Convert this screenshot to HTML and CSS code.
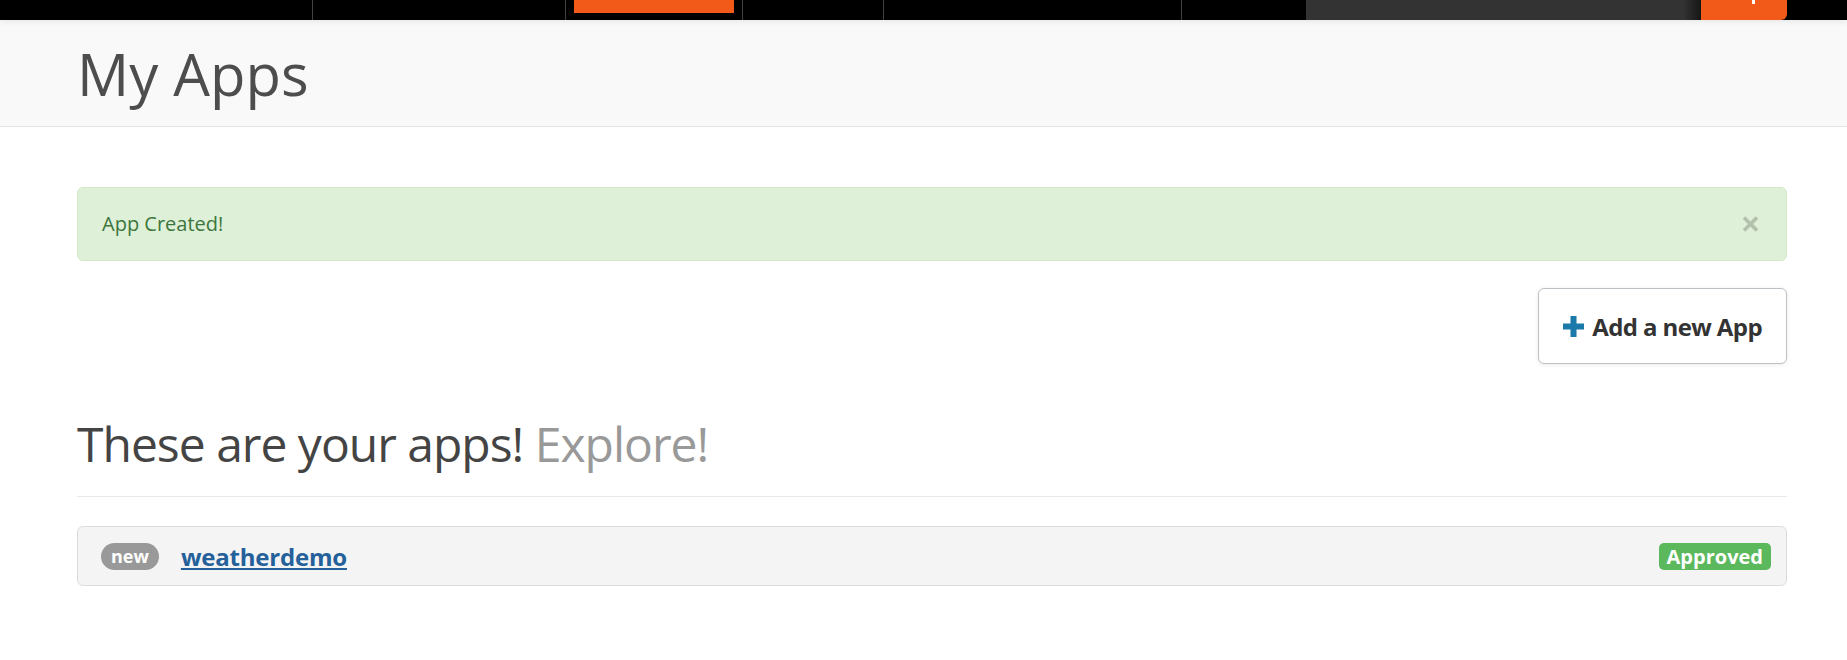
FILE: index.html
```html
<!DOCTYPE html>
<html lang="en">
<head>
  <meta charset="UTF-8">
  <meta name="viewport" content="width=device-width, initial-scale=1.0">
  <title>My Apps</title>
  <link rel="stylesheet" href="styles.css">
</head>
<body>
  <div class="topbar">
    <div class="nav-item nav-1"></div>
    <div class="nav-item nav-2"></div>
    <div class="nav-item nav-3 active"><span class="active-mark"></span></div>
    <div class="nav-item nav-4"></div>
    <div class="nav-item nav-5"></div>
    <div class="nav-spacer"></div>
    <div class="search-box"></div>
    <div class="login-btn"><span class="login-text"></span></div>
  </div>

  <div class="page-header">
    <div class="container">
      <h1>My Apps</h1>
    </div>
  </div>

  <div class="container main">
    <div class="alert">
      <span>App Created!</span>
      <button class="close" aria-label="Close">
        <svg width="17" height="16" viewBox="0 0 17 16"><path d="M2 1.5 L15 14.5 M15 1.5 L2 14.5" stroke="currentColor" stroke-width="3.6" fill="none"/></svg>
      </button>
    </div>

    <div class="actions">
      <button class="btn-add">
        <svg class="plus" width="21" height="21" viewBox="0 0 21 21"><path d="M7.5 0 H13.5 V7.5 H21 V13.5 H13.5 V21 H7.5 V13.5 H0 V7.5 H7.5 Z" fill="#1b7aa9"/></svg>
        Add a new App
      </button>
    </div>

    <h2 class="apps-title">These are your apps! <span class="muted">Explore!</span></h2>
    <hr>

    <div class="app-list">
      <div class="app-row">
        <span class="badge-new">new</span>
        <a href="#" class="app-link">weatherdemo</a>
        <span class="badge-approved">Approved</span>
      </div>
    </div>
  </div>
</body>
</html>
```

FILE: styles.css
```css
*, *::before, *::after { box-sizing: border-box; }
html, body {
  margin: 0;
  padding: 0;
  background: white;
  font-family: 'Open Sans', sans-serif;
  color: #444;
}
.topbar {
  position: relative;
  z-index: 2;
  display: flex;
  height: 20px;
  background: #000;
  box-shadow: 0 2px 6px rgba(0, 0, 0, 0.07);
}
.nav-item { border-right: 1px solid #404040; height: 20px; }
.nav-1 { width: 313px; }
.nav-2 { width: 253px; }
.nav-3 { width: 177px; padding: 0 8px 0 8px; }
.nav-4 { width: 141px; }
.nav-5 { width: 298px; }
.active-mark {
  display: block;
  height: 13px;
  background: #f15a18;
}
.nav-spacer { flex: 1; }
.search-box {
  width: 395px;
  background: linear-gradient(to right, #333 0, #333 calc(100% - 18px), #151515 100%);
}
.login-btn {
  width: 86px;
  margin-right: 60px;
  background: #f15a18;
  border-bottom-right-radius: 6px;
  display: flex;
  justify-content: center;
}
.login-text {
  display: block;
  width: 3px;
  height: 4px;
  margin-left: 18px;
  background: #fff;
}
.container {
  width: 1710px;
  margin-left: 77px;
}
.page-header {
  background: #f9f9f9;
  border-bottom: 1px solid #e4e4e4;
  padding: 22px 0 20px;
}
.page-header h1 {
  margin: 0;
  font-size: 58px;
  font-weight: 400;
  line-height: 64px;
  color: #4d4d4d;
  letter-spacing: 0;
}
.main { padding-top: 60px; }
.alert {
  display: flex;
  align-items: center;
  justify-content: space-between;
  padding: 21px 27px 21px 24px;
  line-height: 30px;
  font-size: 20px;
  color: #3c763d;
  background: #dff0d8;
  border: 1px solid #d6e9c6;
  border-radius: 6px;
}
.close {
  background: none;
  border: none;
  padding: 0;
  color: rgba(0, 0, 0, 0.2);
  display: flex;
  cursor: pointer;
}
.actions {
  display: flex;
  justify-content: flex-end;
  margin-top: 27px;
}
.btn-add {
  display: flex;
  align-items: center;
  gap: 8px;
  height: 76px;
  padding: 0 24px;
  background: white;
  border: 1px solid #bcc1c6;
  border-radius: 6px;
  box-shadow: 0 1px 5px rgba(0, 0, 0, 0.08);
  font-family: 'Open Sans', sans-serif;
  font-weight: 700;
  font-size: 24px;
  color: #333;
  letter-spacing: -0.6px;
  cursor: pointer;
}
.plus { margin-top: 1px; }
.apps-title {
  margin: 50px 0 0;
  font-size: 48px;
  font-weight: 400;
  line-height: 60px;
  color: #444;
  letter-spacing: -1px;
}
.muted { color: #999; }
hr {
  margin: 22px 0 29px;
  border: 0;
  border-top: 1px solid #eaeaea;
}
.app-row {
  display: flex;
  align-items: center;
  height: 60px;
  padding: 0 15px 0 23px;
  background: #f4f4f4;
  border: 1px solid #dcdcdc;
  border-radius: 6px;
}
.badge-new {
  display: inline-block;
  padding: 0 10px;
  height: 27px;
  line-height: 27px;
  border-radius: 14px;
  background: #999;
  color: white;
  font-weight: 700;
  font-size: 18px;
}
.app-link {
  margin-left: 22px;
  font-weight: 700;
  font-size: 24px;
  color: #24609a;
  text-decoration: underline;
  letter-spacing: -0.2px;
}
.badge-approved {
  margin-left: auto;
  padding: 0 8px;
  height: 27px;
  line-height: 27px;
  border-radius: 5px;
  background: #5cb85c;
  color: white;
  font-weight: 700;
  font-size: 20px;
}
```
